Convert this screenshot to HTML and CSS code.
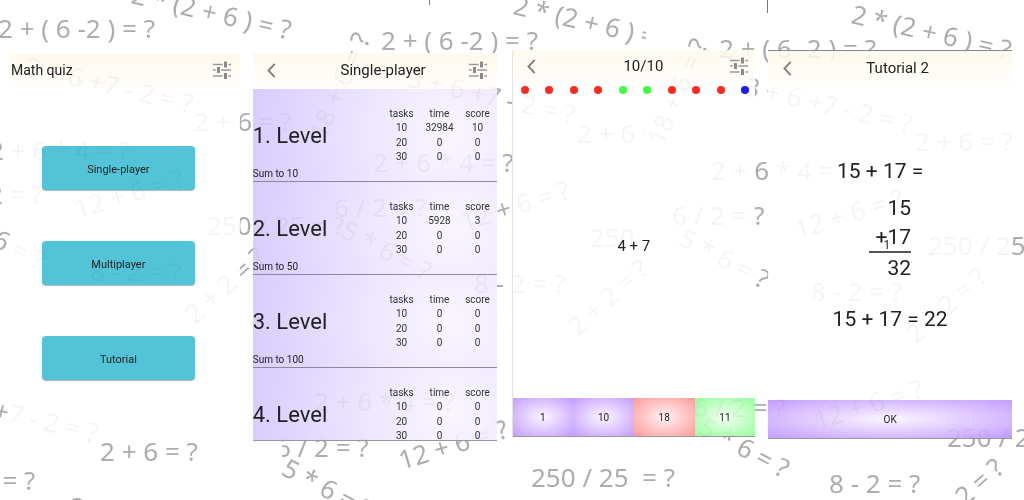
FILE: index.html
```html
<!DOCTYPE html>
<html lang="en">
<head>
<meta charset="utf-8">
<title>Math quiz</title>
<link rel="stylesheet" href="styles.css">
</head>
<body>
<svg class="doodles" aria-hidden="true">
  <defs>
    <clipPath id="cut-right"><rect x="500" y="0" width="146" height="50"/></clipPath>
    <clipPath id="cut-left"><rect x="282" y="430" width="120" height="70"/></clipPath>
    <clipPath id="cut-mid"><rect x="570" y="120" width="75" height="140"/></clipPath>
  </defs>
  <path class="tick" d="M429.500 0V5M767.500 0V13"/>
  <text transform="translate(-2 38)">2 + ( 6 -2 ) = ?</text>
  <text transform="translate(381 50)">2 + ( 6 -2 ) = ?</text>
  <text transform="translate(719 58)">2 + ( 6 -2 ) = ?</text>
  <text transform="translate(130 3) rotate(13)">2 * (2 + 6 ) = ?</text>
  <g clip-path="url(#cut-right)"><text transform="translate(512 14) rotate(13)">2 * (2 + 6 ) = ?</text></g>
  <text transform="translate(850 23) rotate(13)">2 * (2 + 6 ) = ?</text>
  <text transform="translate(325 141) rotate(-66)">18 + 6 = ?</text>
  <text transform="translate(663 147) rotate(-66)">18 + 6 = ?</text>
  <text transform="translate(24 75) rotate(13)">3 + 6 +7 - 2 = ?</text>
  <text transform="translate(406 86) rotate(13)">3 + 6 +7 - 2 = ?</text>
  <text transform="translate(743 95) rotate(13)">3 + 6 +7 - 2 = ?</text>
  <text transform="translate(-71 404) rotate(13)">3 + 6 +7 - 2 = ?</text>
  <text transform="translate(194 131)">2 + 6 = ?</text>
  <g clip-path="url(#cut-mid)"><text transform="translate(577 143)">2 + 6 = ?</text><text transform="translate(590 247)">250 / 25 = ?</text></g>
  <text transform="translate(915 151)">2 + 6 = ?</text>
  <text transform="translate(100 461)">2 + 6 = ?</text>
  <text transform="translate(-11 160)">2 + 6 * 4 = ?</text>
  <text transform="translate(373 172)">2 + 6 * 4 = ?</text>
  <text transform="translate(711 180)">2 + 6 * 4 = ?</text>
  <text transform="translate(314 411)">2 + 6 * 4 = ?</text>
  <text transform="translate(78 219) rotate(-17)">12 + 6 = ?</text>
  <text transform="translate(464 231) rotate(-17)">12 + 6 = ?</text>
  <text transform="translate(798 239) rotate(-17)">12 + 6 = ?</text>
  <text transform="translate(402 470) rotate(-17)">12 + 6 = ?</text>
  <text transform="translate(817 430) rotate(-17)">12 + 6 = ?</text>
  <text transform="translate(-50 204)">6 / 2 = ?</text>
  <text transform="translate(334 217)">6 / 2 = ?</text>
  <text transform="translate(672 225)">6 / 2 = ?</text>
  <g clip-path="url(#cut-left)"><text transform="translate(276 457)">6 / 2 = ?</text><text transform="translate(280 474) rotate(28)">5 * 6 = ?</text></g>
  <text transform="translate(693 417)">6 / 2 = ?</text>
  <text transform="translate(207 235)">250 / 25 = ?</text>
  <text transform="translate(928 255)">250 / 25 = ?</text>
  <text transform="translate(531 487)" xml:space="preserve">250 / 25  = ?</text>
  <text transform="translate(947 447)">250 / 25 = ?</text>
  <text transform="translate(-47 225) rotate(28)">5 * 6 = ?</text>
  <text transform="translate(339 236) rotate(28)">5 * 6 = ?</text>
  <text transform="translate(677 244) rotate(28)">5 * 6 = ?</text>
  <text transform="translate(697 433) rotate(28)">5 * 6 = ?</text>
  <text transform="translate(90 281)">8 - 2 = ?</text>
  <text transform="translate(474 293)">8 - 2 = ?</text>
  <text transform="translate(811 301)">8 - 2 = ?</text>
  <text transform="translate(829 493)">8 - 2 = ?</text>
  <text transform="translate(-56 490)">8 - 2 = ?</text>
  <text transform="translate(195 325) rotate(-42)">2 + 2 = ?</text>
  <text transform="translate(578 337) rotate(-42)">2 + 2 = ?</text>
  <text transform="translate(916 345) rotate(-42)">2 + 2 = ?</text>
  <text transform="translate(933 536) rotate(-42)">2 + 2 = ?</text>
  <text transform="translate(72 516)">?</text>
</svg>

<svg class="sprite" aria-hidden="true">
  <symbol id="tune" viewBox="0 0 18 18">
    <path d="M0 3.500H18M0 9H18M0 15H18" stroke="#999" stroke-width="1.300"/>
    <path d="M12.500 .5V6.500M5.500 6V12M12.500 12V18" stroke="#fffcf7" stroke-width="5.600"/>
    <path d="M12.500 .5V6.500M5.500 6V12M12.500 12V18" stroke="#8a8a8a" stroke-width="3"/>
  </symbol>
  <symbol id="back" viewBox="0 0 8 14">
    <path d="M7 .8L1.200 7L7 13.200" fill="none" stroke="#808080" stroke-width="1.800"/>
  </symbol>
</svg>

<main class="screens">
  <section class="screen home">
    <header class="bar">
      <h1 class="title title-home">Math quiz</h1>
      <button class="icon" aria-label="Settings"><svg class="tune"><use href="#tune"/></svg></button>
    </header>
    <nav class="menu">
      <button class="choice">Single-player</button>
      <button class="choice">Multiplayer</button>
      <button class="choice">Tutorial</button>
    </nav>
  </section>

  <section class="screen single">
    <header class="bar">
      <button class="icon" aria-label="Back"><svg class="back"><use href="#back"/></svg></button>
      <h2 class="title">Single-player</h2>
      <button class="icon" aria-label="Settings"><svg class="tune"><use href="#tune"/></svg></button>
    </header>
    <div class="levels">
      <article class="level">
        <h3 class="name">1. Level</h3>
        <table class="scores">
          <tr><th>tasks</th><th>time</th><th>score</th></tr>
          <tr><td>10</td><td>32984</td><td>10</td></tr>
          <tr><td>20</td><td>0</td><td>0</td></tr>
          <tr><td>30</td><td>0</td><td>0</td></tr>
        </table>
        <p class="goal">Sum to 10</p>
      </article>
      <article class="level">
        <h3 class="name">2. Level</h3>
        <table class="scores">
          <tr><th>tasks</th><th>time</th><th>score</th></tr>
          <tr><td>10</td><td>5928</td><td>3</td></tr>
          <tr><td>20</td><td>0</td><td>0</td></tr>
          <tr><td>30</td><td>0</td><td>0</td></tr>
        </table>
        <p class="goal">Sum to 50</p>
      </article>
      <article class="level">
        <h3 class="name">3. Level</h3>
        <table class="scores">
          <tr><th>tasks</th><th>time</th><th>score</th></tr>
          <tr><td>10</td><td>0</td><td>0</td></tr>
          <tr><td>20</td><td>0</td><td>0</td></tr>
          <tr><td>30</td><td>0</td><td>0</td></tr>
        </table>
        <p class="goal">Sum to 100</p>
      </article>
      <article class="level">
        <h3 class="name">4. Level</h3>
        <table class="scores">
          <tr><th>tasks</th><th>time</th><th>score</th></tr>
          <tr><td>10</td><td>0</td><td>0</td></tr>
          <tr><td>20</td><td>0</td><td>0</td></tr>
          <tr><td>30</td><td>0</td><td>0</td></tr>
        </table>
      </article>
    </div>
  </section>

  <section class="screen quiz">
    <header class="bar">
      <button class="icon" aria-label="Back"><svg class="back"><use href="#back"/></svg></button>
      <h2 class="title">10/10</h2>
      <button class="icon" aria-label="Settings"><svg class="tune"><use href="#tune"/></svg></button>
    </header>
    <div class="progress">
      <span class="dot wrong"></span><span class="dot wrong"></span><span class="dot wrong"></span><span class="dot wrong"></span><span class="dot right"></span><span class="dot right"></span><span class="dot wrong"></span><span class="dot wrong"></span><span class="dot wrong"></span><span class="dot current"></span>
    </div>
    <p class="task">4 + 7</p>
    <div class="answers">
      <button class="answer violet">1</button>
      <button class="answer violet">10</button>
      <button class="answer red">18</button>
      <button class="answer green">11</button>
    </div>
  </section>

  <section class="screen tutorial">
    <header class="bar">
      <button class="icon" aria-label="Back"><svg class="back"><use href="#back"/></svg></button>
      <h2 class="title">Tutorial 2</h2>
      <span class="spacer"></span>
    </header>
    <div class="lesson">
      <p class="sum open">15 + 17 =</p>
      <div class="column">
        <p class="sum">15</p>
        <p class="sum added">+<span class="carry">1</span>17</p>
        <p class="sum">32</p>
      </div>
      <p class="sum">15 + 17 = 22</p>
    </div>
    <button class="answer violet">OK</button>
  </section>
</main>
</body>
</html>
```
FILE: styles.css
```css
* { box-sizing: border-box; }

body {
  margin: 0;
  min-height: 100vh;
  overflow: hidden;
  background: #fff;
  color: #222;
  font-family: Roboto, sans-serif;
}

h1, h2, h3, p { margin: 0; font-weight: 400; }

button {
  padding: 0;
  border: 0;
  background: none;
  color: inherit;
  font: inherit;
}

.doodles {
  position: absolute;
  inset: 0;
  width: 100%;
  height: 100%;
  fill: #adadad;
  font-family: "Noto Sans", "Open Sans", sans-serif;
  font-size: 26px;
}

.tick { stroke: #777; }

.sprite { position: absolute; width: 0; height: 0; }

.screens {
  position: relative;
  display: grid;
  grid-template-columns: 230fr 244fr 246fr 244fr;
  gap: 13px;
  padding: 50px 12px 0 10px;
}

.screen {
  display: flex;
  flex-direction: column;
  min-width: 0;
  background: rgba(255, 255, 255, 0.88);
}

.home, .single { margin-top: 3px; }
.quiz { margin: 0 0 4px 3px; box-shadow: -1px 0 #e4e4e4; }
.tutorial { margin-bottom: 2px; border-top: 1px solid #888; }
.single { border-bottom: 1px solid #999; }

.bar {
  display: flex;
  align-items: center;
  justify-content: space-between;
  height: 36px;
  padding: 0 9px 2px 10px;
  background: linear-gradient(#fff9ee, #fffefc);
  mix-blend-mode: multiply;
}

.home .bar { padding-left: 1px; }
.quiz .bar { height: 34px; padding-right: 7px; }

.title { font-size: 15px; line-height: 18px; }
.title-home { font-size: 14px; }

.icon {
  display: flex;
  align-items: center;
  justify-content: center;
  width: 18px;
  height: 24px;
}

.spacer { width: 4px; }

.tune { width: 18px; height: 18px; }
.back { width: 9px; height: 15px; }

.single .title, .quiz .title { padding-left: 16px; }

.menu {
  display: flex;
  flex-direction: column;
  gap: 51px;
  padding: 57px 45px 0 32px;
}

.choice {
  height: 44px;
  padding-top: 2px;
  border-radius: 4px;
  background: #53c4d8;
  box-shadow: 0 1px 1px #a9b9bc;
  font-size: 11px;
  mix-blend-mode: multiply;
}

.levels { height: 351px; overflow: hidden; mix-blend-mode: multiply; }

.level {
  display: grid;
  grid-template-columns: 1fr 114px;
  grid-template-rows: 75px 17px;
  border-bottom: 1px solid #8d879c;
  background: radial-gradient(circle 210px at 82% 50%, #f9f6ff, #efe9ff 35%, #d7cbff);
  font-size: 10px;
  line-height: 14px;
}

.name { padding-top: 33px; font-size: 22px; line-height: 28px; }
.goal { padding-top: 3px; }

.scores {
  width: 100%;
  margin-top: 18px;
  border-collapse: collapse;
  table-layout: fixed;
  color: #333;
}

.scores th, .scores td {
  padding: 0;
  font-weight: 400;
  text-align: center;
}

.progress {
  display: flex;
  justify-content: space-between;
  padding: 2px 6px 0 8px;
}

.dot { width: 8px; height: 8px; border-radius: 50%; }
.wrong { background: #ff2a1c; }
.right { background: #3dff3d; }
.current { background: #1a1aff; }

.task {
  flex: 1;
  display: flex;
  align-items: center;
  justify-content: center;
  font-size: 15px;
}

.answers { display: flex; mix-blend-mode: multiply; }

.answer {
  flex: 1;
  height: 39px;
  border-bottom: 1px solid #999;
  font-size: 10px;
}

.tutorial .answer { flex: none; mix-blend-mode: multiply; }
.violet { background: radial-gradient(#faf6ff, #c49cff); }
.red { background: radial-gradient(#fff3f3, #ff9a9a); }
.green { background: radial-gradient(#f3fff3, #98ff9e); }

.lesson {
  flex: 1;
  display: flex;
  flex-direction: column;
  align-items: center;
  gap: 21px;
  padding-top: 69px;
}

.sum { font-size: 21px; line-height: 30px; }
.open { padding-right: 20px; margin-bottom: -14px; }

.column { width: 42px; text-align: right; }
.added { position: relative; border-bottom: 2px solid #555; line-height: 28px; }
.carry { position: absolute; right: 21px; bottom: -1px; font-size: 12px; line-height: 14px; }
```
